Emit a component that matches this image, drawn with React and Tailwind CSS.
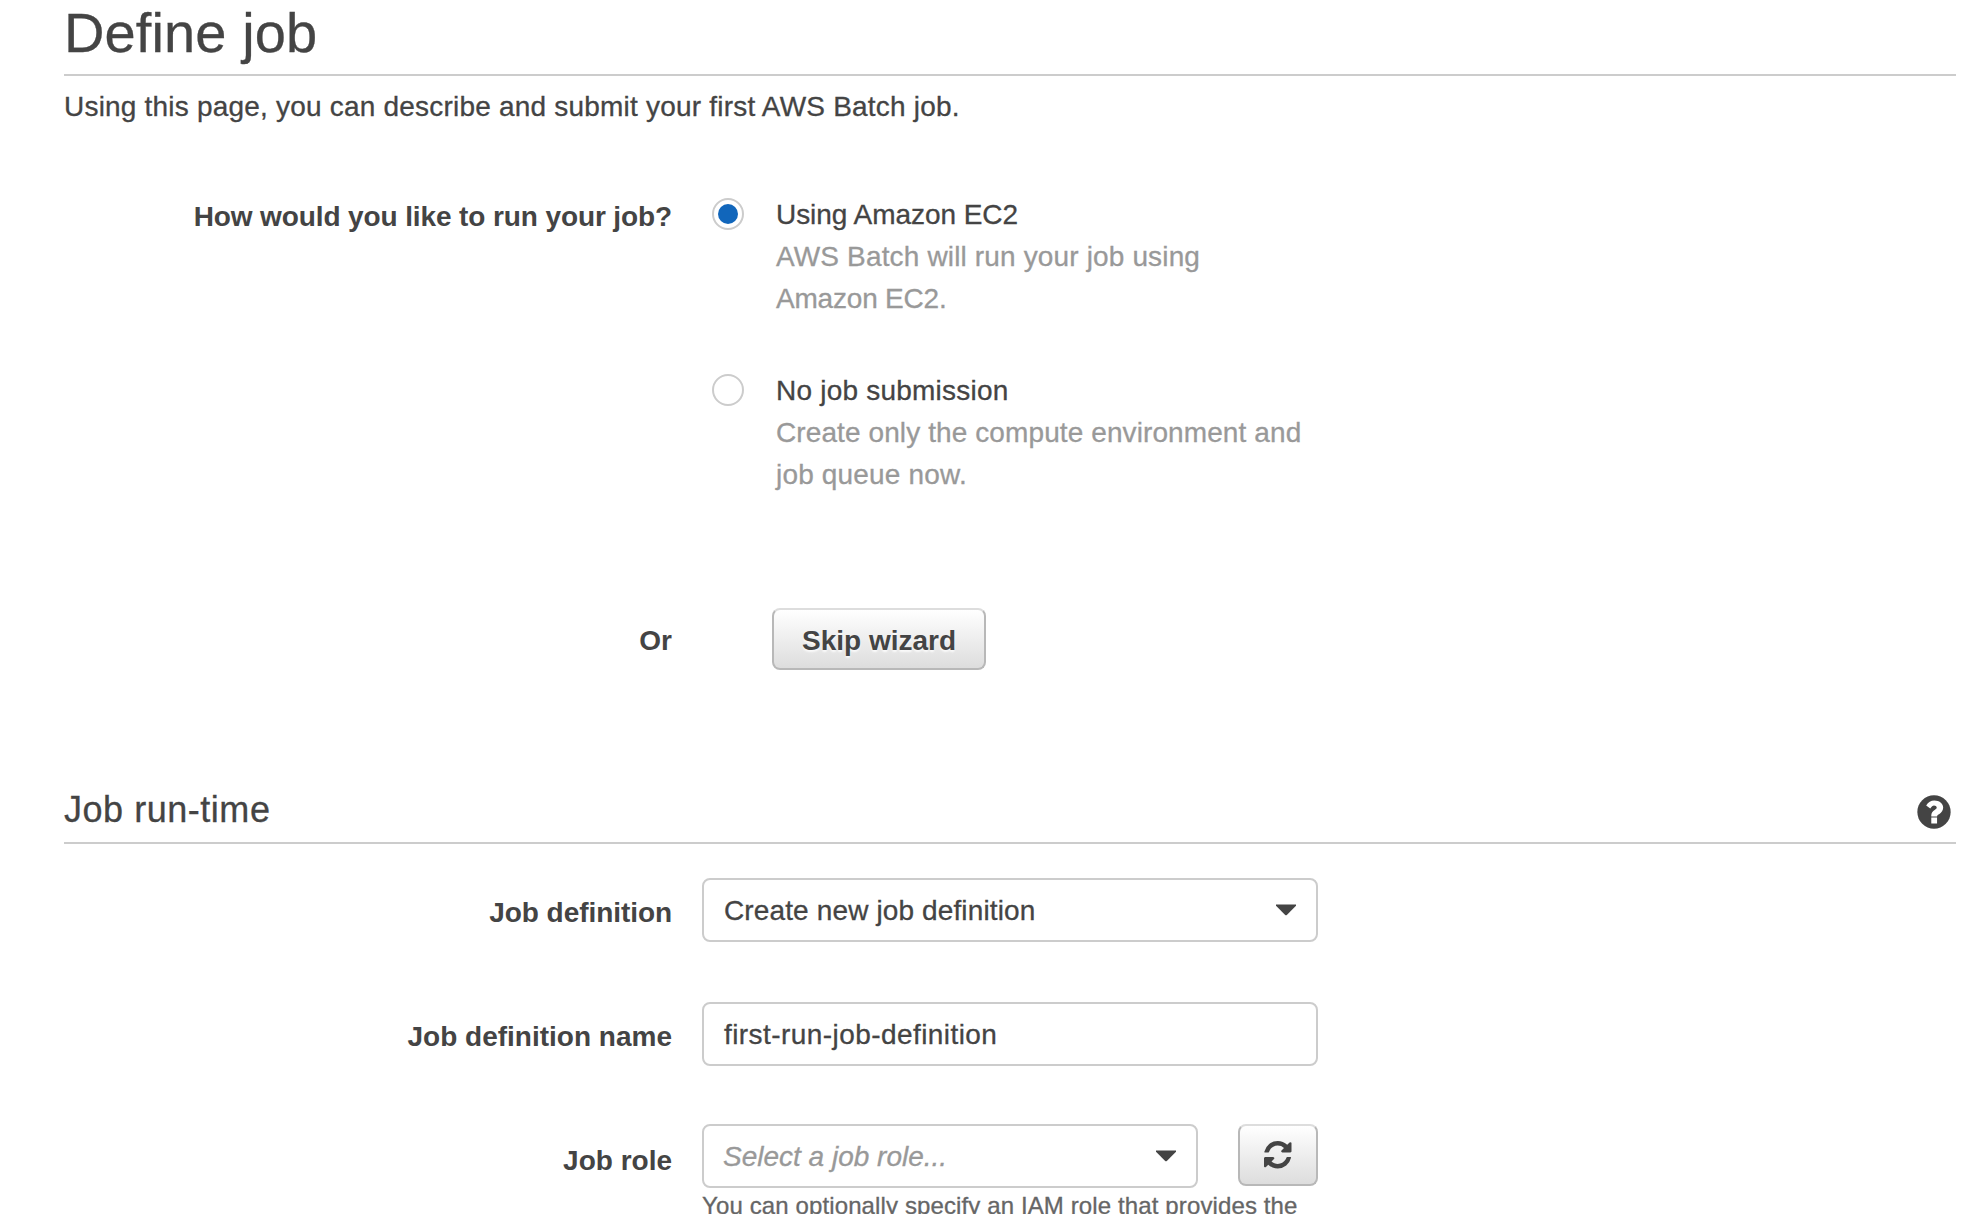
function HelpIcon() {
  return (
    <svg viewBox="0 0 100 100" className="mt-[19px] mr-[5px] size-[34px]" aria-label="Help">
      <circle cx="50" cy="50" r="49" fill="#444" />
      <path
        fill="#fff"
        d="M27 31C33 21 41 16 51 16c14 0 26 8 26 21 0 9-5 15-11 19-4 2-7 4-7 7H42v-3c0-8 4-12 10-16 4-2 6-4 6-7 0-4-4-6-8-6s-7 3-11 9zM42 66.500h17V84H42z"
      />
    </svg>
  );
}

function RefreshIcon() {
  return (
    <svg viewBox="0 0 1536 1536" className="size-[27.500px]" fill="#444">
      <path d="M1511 928q0 5-1 7-64 268-268 434.500t-478 166.500q-146 0-282.500-55t-243.500-157l-129 129q-19 19-45 19t-45-19-19-45v-448q0-26 19-45t45-19h448q26 0 45 19t19 45-19 45l-137 137q71 66 161 102t187 36q134 0 250-65t186-179q11-17 53-117 8-23 30-23h192q13 0 22.500 9.500t9.500 22.500zm25-800v448q0 26-19 45t-45 19h-448q-26 0-45-19t-19-45 19-45l138-138q-148-137-349-137-134 0-250 65t-186 179q-11 17-53 117-8 23-30 23h-199q-13 0-22.500-9.500t-9.500-22.500v-7q65-268 270-434.500t480-166.500q146 0 284 55.500t245 156.500l130-129q19-19 45-19t45 19 19 45z" />
    </svg>
  );
}

function Caret() {
  return (
    <svg viewBox="0 0 20 12" className="mt-[24px] h-[12px] w-[20px] shrink-0" fill="#444">
      <path d="M0 .5h20v1.200L10.800 11q-.8.700-1.600 0L0 1.700z" />
    </svg>
  );
}

function Label({ className, children }) {
  return (
    <div className={`w-[608px] shrink-0 text-right font-bold [-webkit-text-stroke:0] ${className}`}>
      {children}
    </div>
  );
}

function Radio({ checked }) {
  return (
    <span className="mt-[5px] flex size-8 shrink-0 items-center justify-center rounded-full border-2 border-[#ccc] bg-white">
      {checked && <span className="size-5 rounded-full bg-[#1166bb]" />}
    </span>
  );
}

function Option({ checked, title, titleClass, lines }) {
  return (
    <div className="flex h-[176px]">
      <Radio checked={checked} />
      <div className="mt-px ml-8">
        <div className={titleClass}>{title}</div>
        {lines.map(([text, cls]) => (
          <div key={text} className={`text-[#999] ${cls}`}>{text}</div>
        ))}
      </div>
    </div>
  );
}

const button =
  "flex h-[62px] items-center justify-center rounded-lg border-2 border-[#b8b8b8] border-t-[#ddd] bg-linear-to-b from-white to-[#ddd] font-bold";
const field = "flex h-16 justify-between rounded-lg border-2 border-[#ccc] bg-white pr-5 pl-5";

export default function App() {
  return (
    <main className="h-[1214px] w-[1982px] overflow-hidden bg-white pr-[26px] pl-16 font-['Liberation_Sans',Arial,sans-serif] text-[28px] leading-[42px] whitespace-nowrap text-[#444] [-webkit-text-stroke:0.3px]">
      <h1 className="h-[76px] border-b-2 border-[#ccc] pt-px text-[56px] leading-[64px] tracking-[0.1px]">
        Define job
      </h1>
      <p className="mt-[10px] tracking-[0.205px]">
        Using this page, you can describe and submit your first AWS Batch job.
      </p>

      <section className="mt-[65px] flex h-[415px]">
        <Label className="mt-[3px] tracking-[-0.11px]">How would you like to run your job?</Label>
        <div className="ml-10">
          <Option
            checked
            title="Using Amazon EC2"
            titleClass="tracking-[-0.05px]"
            lines={[
              ["AWS Batch will run your job using", "tracking-[0.15px]"],
              ["Amazon EC2.", "tracking-[-0.2px]"],
            ]}
          />
          <Option
            title="No job submission"
            titleClass="tracking-[0.22px]"
            lines={[
              ["Create only the compute environment and", "tracking-[0.1px]"],
              ["job queue now.", "tracking-[0.18px]"],
            ]}
          />
        </div>
      </section>

      <section className="flex h-[168px]">
        <Label className="mt-[12px]">Or</Label>
        <button className={`ml-[100px] w-[214px] ${button}`}>
          <span className="mt-[3px] [-webkit-text-stroke:0] [text-shadow:0_2px_2px_rgba(255,255,255,0.8)]">
            Skip wizard
          </span>
        </button>
      </section>

      <header className="flex h-[68px] justify-between border-b-2 border-[#ccc]">
        <h2 className="mt-[10px] text-[36px] leading-[48px] tracking-[0.53px]">Job run-time</h2>
        <HelpIcon />
      </header>

      <section className="mt-[34px]">
        <div className="flex h-[124px]">
          <Label className="mt-[14px] tracking-[-0.06px]">Job definition</Label>
          <div className={`ml-[30px] w-[616px] ${field}`}>
            <span className="mt-[10px] tracking-[0.13px]">Create new job definition</span>
            <Caret />
          </div>
        </div>
        <div className="flex h-[122px]">
          <Label className="mt-[14px]">Job definition name</Label>
          <div className={`ml-[30px] w-[616px] ${field}`}>
            <span className="mt-[10px] tracking-[0.43px]">first-run-job-definition</span>
          </div>
        </div>
        <div className="flex">
          <Label className="mt-[16px]">Job role</Label>
          <div className="ml-[30px]">
            <div className="flex">
              <div className={`w-[496px] ${field}`}>
                <span className="mt-[10px] -ml-px text-[#999] italic">Select a job role...</span>
                <Caret />
              </div>
              <button className={`ml-10 w-20 ${button}`} aria-label="Refresh">
                <RefreshIcon />
              </button>
            </div>
            <p className="text-[24px] leading-[36px] tracking-[0.12px] text-[#666]">
              You can optionally specify an IAM role that provides the
            </p>
          </div>
        </div>
      </section>
    </main>
  );
}
